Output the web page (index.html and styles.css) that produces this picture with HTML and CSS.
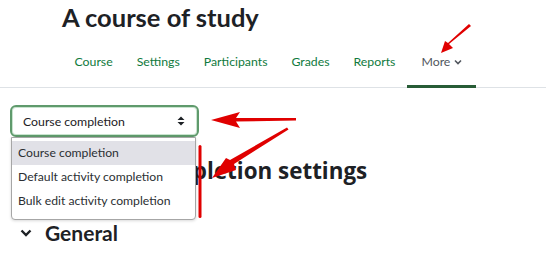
FILE: index.html
```html
<!DOCTYPE html>
<html lang="en">
<head>
<meta charset="utf-8">
<title>A course of study</title>
<link rel="stylesheet" href="styles.css">
</head>
<body>
<div class="page">
  <header class="page-header">
    <h1 class="title">A course of study</h1>
  </header>
  <nav class="tabs">
    <a class="tab" href="#">Course</a>
    <a class="tab" href="#">Settings</a>
    <a class="tab" href="#">Participants</a>
    <a class="tab" href="#">Grades</a>
    <a class="tab" href="#">Reports</a>
    <a class="tab active" href="#">More<svg class="caret" width="8" height="6" viewBox="0 0 8 6"><path d="M1 1.5 L4 4.5 L7 1.5" fill="none" stroke="currentColor" stroke-width="1.6"/></svg></a>
  </nav>
  <main class="content">
    <div class="select-wrap">
      <div class="select">
        <span class="select-text">Course completion</span>
        <svg class="updown" width="8" height="10" viewBox="0 0 8 10"><path d="M0.5 4 L4 0.5 L7.5 4 Z M0.5 6 L4 9.5 L7.5 6 Z" fill="#1d2125"/></svg>
      </div>
      <ul class="dropdown">
        <li class="option selected">Course completion</li>
        <li class="option">Default activity completion</li>
        <li class="option">Bulk edit activity completion</li>
      </ul>
    </div>
    <h2 class="heading">Edit course completion settings</h2>
    <h3 class="section"><svg class="chev" width="12" height="8" viewBox="0 0 12 8"><path d="M1.5 1.5 L6 6 L10.5 1.5" fill="none" stroke="#1d2125" stroke-width="2.4"/></svg>General</h3>
  </main>
  <svg class="annot" width="546" height="270" viewBox="0 0 546 270">
    <g fill="#e00000" stroke="none">
      <path d="M469 24 L471 26 L449 44 L453 48 L441 53 L445 41 L448 43 Z"/>
      <path d="M296 118 L296 120.5 L236 121.5 L240 128 L211 120 L240 112 L236 118 Z"/>
      <path d="M287 127.5 L288.5 129.5 L234 164 L236 170 L212 178 L226 158 L230 160 Z"/>
      <rect x="198.5" y="145" width="3" height="73" rx="1.5"/>
    </g>
  </svg>
</div>
</body>
</html>
```
FILE: styles.css
```css
* { box-sizing: border-box; }
html, body { margin: 0; padding: 0; background: #fff; }
body {
  font-family: Lato, "Open Sans", sans-serif;
  color: #1d2125;
  width: 546px;
  height: 270px;
  overflow: hidden;
}
.page { position: relative; width: 546px; height: 270px; }
.page-header { padding: 1px 0 0 62px; }
.title {
  margin: 0;
  font-size: 25.5px;
  font-weight: 700;
  line-height: 32px;
}
.tabs {
  display: flex;
  margin-top: 15px;
  padding-left: 62.5px;
  border-bottom: 1px solid #dee2e6;
  height: 40px;
}
.tab {
  display: flex;
  align-items: flex-start;
  gap: 4px;
  padding: 5px 12px 0;
  font-size: 12.3px;
  line-height: 18px;
  color: #0f7a3d;
  text-decoration: none;
  border-bottom: 3px solid transparent;
  margin-bottom: -1px;
}
.tab.active {
  color: #51565e;
  border-bottom-color: #285c36;
  padding-left: 14px;
  padding-right: 14px;
}
.caret { margin-top: 6px; }
.content { padding: 17px 10px 0; }
.select-wrap { position: relative; width: 189px; }
.select {
  display: flex;
  align-items: center;
  justify-content: space-between;
  height: 32px;
  padding: 0 12px 0 11px;
  border: 2px solid #5f9a6c;
  border-radius: 6px;
  box-shadow: inset 0 0 0 1px #c9e4cf;
  font-size: 12.3px;
}
.dropdown {
  position: absolute;
  top: 32px;
  left: 1px;
  width: 185px;
  margin: 0;
  padding: 3px 0 6px;
  list-style: none;
  background: #fff;
  border: 1px solid #a6a6a6;
  border-radius: 0 0 4px 4px;
  box-shadow: 0 1px 3px rgba(0,0,0,0.15);
  z-index: 2;
}
.option {
  height: 24px;
  line-height: 24px;
  padding-left: 6px;
  font-size: 12.2px;
  color: #2b2f33;
}
.option.selected { background: #e1e1e7; }
.heading {
  margin: 19px 0 0 6px;
  font-family: "Open Sans", Lato, sans-serif;
  font-size: 22.4px;
  font-weight: 700;
  line-height: 30px;
}
.section {
  display: flex;
  align-items: center;
  gap: 13px;
  margin: 34px 0 0 10px;
  font-size: 21px;
  font-weight: 700;
  line-height: 26px;
}
.annot { position: absolute; left: 0; top: 0; pointer-events: none; z-index: 5; }
```
